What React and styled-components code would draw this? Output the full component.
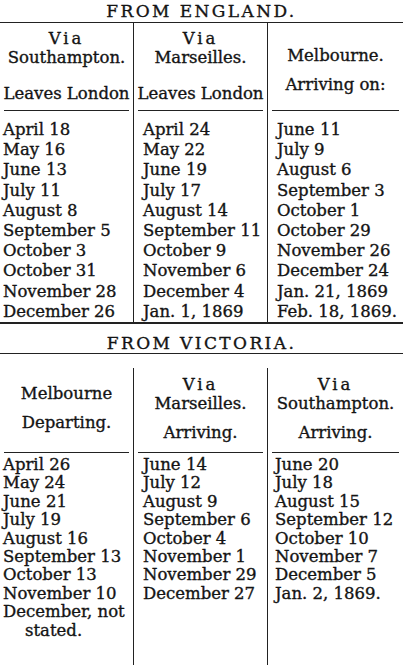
import React from "react";
import styled, { createGlobalStyle } from "styled-components";

const GlobalStyle = createGlobalStyle`
  html, body {
    margin: 0;
    padding: 0;
    background: #fff;
  }
  body {
    font-family: "DejaVu Serif", "Liberation Serif", serif;
    color: #141414;
    -webkit-text-stroke: 0.35px #141414;
  }
`;

const Page = styled.div`
  width: 403px;
  height: 665px;
  overflow: hidden;
  display: flex;
  flex-direction: column;
`;

const Title = styled.div`
  height: ${(p) => p.$h}px;
  padding-top: ${(p) => p.$drop || 0}px;
  box-sizing: border-box;
  display: flex;
  align-items: center;
  justify-content: center;
  font-size: 17px;
  line-height: 1;
  letter-spacing: 2.4px;
`;

const Rule = styled.div`
  height: ${(p) => p.$w || 1}px;
  background: #222;
  flex: none;
`;

const Table = styled.div`
  display: grid;
  grid-template-columns: 133px 134px 1fr;
  margin-top: ${(p) => p.$top || 0}px;
  flex: ${(p) => (p.$grow ? 1 : "none")};
`;

const Column = styled.div`
  display: flex;
  flex-direction: column;
  border-left: ${(p) => (p.$first ? "none" : "1px solid #222")};
`;

const Head = styled.div`
  height: ${(p) => p.$h}px;
  padding-top: ${(p) => p.$pad}px;
  box-sizing: border-box;
  display: flex;
  flex-direction: column;
  align-items: center;
  font-size: 16.5px;
  line-height: 19px;
`;

const HeadLine = styled.div`
  margin-top: ${(p) => p.$gap || 0}px;
  letter-spacing: ${(p) => (p.$spaced ? "3px" : "0")};
  white-space: nowrap;
`;

const HeadRule = styled.div`
  height: 1px;
  background: #222;
  margin: 0 4px;
`;

const Dates = styled.ul`
  list-style: none;
  margin: ${(p) => p.$top}px 0 0;
  padding: 0 0 0 ${(p) => p.$indent}px;
  font-size: 16.5px;
  line-height: ${(p) => p.$lh}px;
  white-space: nowrap;
`;

const DateItem = styled.li`
  padding-left: ${(p) => (p.$sub ? 22 : 0)}px;
`;

const england = [
  {
    pad: 5.5,
    head: [
      { t: "Via", spaced: true },
      { t: "Southampton." },
      { t: "Leaves London", gap: 17 },
    ],
    indent: 3,
    dates: [
      "April 18",
      "May 16",
      "June 13",
      "July 11",
      "August 8",
      "September 5",
      "October 3",
      "October 31",
      "November 28",
      "December 26",
    ],
  },
  {
    pad: 5.5,
    head: [
      { t: "Via", spaced: true },
      { t: "Marseilles." },
      { t: "Leaves London", gap: 17 },
    ],
    indent: 9,
    dates: [
      "April 24",
      "May 22",
      "June 19",
      "July 17",
      "August 14",
      "September 11",
      "October 9",
      "November 6",
      "December 4",
      "Jan. 1, 1869",
    ],
  },
  {
    pad: 22.5,
    head: [{ t: "Melbourne." }, { t: "Arriving on:", gap: 10 }],
    indent: 9,
    dates: [
      "June 11",
      "July 9",
      "August 6",
      "September 3",
      "October 1",
      "October 29",
      "November 26",
      "December 24",
      "Jan. 21, 1869",
      "Feb. 18, 1869.",
    ],
  },
];

const victoria = [
  {
    pad: 15.5,
    head: [{ t: "Melbourne" }, { t: "Departing.", gap: 10 }],
    indent: 3,
    dates: [
      "April 26",
      "May 24",
      "June 21",
      "July 19",
      "August 16",
      "September 13",
      "October 13",
      "November 10",
      "December, not",
      { t: "stated.", sub: true },
    ],
  },
  {
    pad: 6.5,
    head: [
      { t: "Via", spaced: true },
      { t: "Marseilles." },
      { t: "Arriving.", gap: 10 },
    ],
    indent: 9,
    dates: [
      "June 14",
      "July 12",
      "August 9",
      "September 6",
      "October 4",
      "November 1",
      "November 29",
      "December 27",
    ],
  },
  {
    pad: 6.5,
    head: [
      { t: "Via", spaced: true },
      { t: "Southampton." },
      { t: "Arriving.", gap: 10 },
    ],
    indent: 7,
    dates: [
      "June 20",
      "July 18",
      "August 15",
      "September 12",
      "October 10",
      "November 7",
      "December 5",
      "Jan. 2, 1869.",
    ],
  },
];

const Schedule = ({ cols, headH, datesTop, lh, top, grow }) => (
  <Table $top={top} $grow={grow}>
    {cols.map((col, i) => (
      <Column key={i} $first={i === 0}>
        <Head $h={headH} $pad={col.pad}>
          {col.head.map((h, j) => (
            <HeadLine key={j} $gap={h.gap} $spaced={h.spaced}>
              {h.t}
            </HeadLine>
          ))}
        </Head>
        <HeadRule />
        <Dates $top={datesTop} $indent={col.indent} $lh={lh}>
          {col.dates.map((d, j) =>
            typeof d === "string" ? (
              <DateItem key={j}>{d}</DateItem>
            ) : (
              <DateItem key={j} $sub={d.sub}>
                {d.t}
              </DateItem>
            )
          )}
        </Dates>
      </Column>
    ))}
  </Table>
);

export default function App() {
  return (
    <>
      <GlobalStyle />
      <Page>
        <Title $h={22} $drop={0}>FROM ENGLAND.</Title>
        <Rule />
        <Schedule cols={england} headH={87} datesTop={9} lh={20.2} />
        <Rule $w={2} />
        <Title $h={29} $drop={9}>FROM VICTORIA.</Title>
        <Rule />
        <Schedule
          cols={victoria}
          headH={84}
          datesTop={3}
          lh={18.4}
          top={14}
          grow
        />
      </Page>
    </>
  );
}
